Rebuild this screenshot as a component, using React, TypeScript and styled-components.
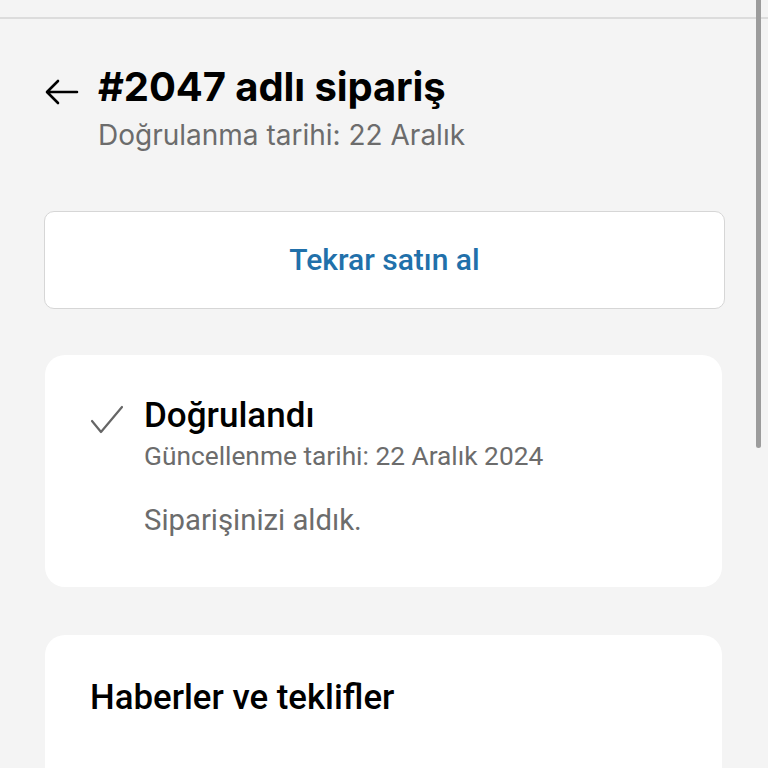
import React from "react";
import styled, { createGlobalStyle } from "styled-components";

const Global = createGlobalStyle`
  html, body { margin: 0; padding: 0; background: #f4f4f4; }
  body { font-family: Inter, "Noto Sans", "Liberation Sans", sans-serif; overflow: hidden; }
`;

const Page = styled.div`
  width: 768px;
  height: 768px;
  background: #f4f4f4;
  overflow: hidden;
  position: relative;
`;

const TopRule = styled.div`
  margin-top: 17px;
  height: 2px;
  background: #dcdcdc;
`;

const Content = styled.div`
  display: flex;
  flex-direction: column;
  padding: 0 44px 0 44px;
`;

const Header = styled.div`
  display: flex;
  align-items: flex-start;
  gap: 18px;
  margin-top: 43px;
`;

const BackButton = styled.div`
  width: 36px;
  height: 36px;
  margin-top: 12px;
  display: flex;
  align-items: center;
  justify-content: center;
`;

const TitleBlock = styled.div`
  display: flex;
  flex-direction: column;
`;

const Title = styled.h1`
  margin: 0;
  font-size: 40px;
  line-height: 50px;
  font-weight: 700;
  color: #000;
  letter-spacing: -0.1px;
`;

const Subtitle = styled.div`
  font-size: 28px;
  line-height: 34px;
  color: #6c6c6c;
  margin-top: 6px;
`;

const ActionButton = styled.button`
  margin-top: 59px;
  height: 98px;
  border: 1px solid #d6d6d6;
  border-radius: 10px;
  background: #fff;
  font-family: Roboto, "Liberation Sans", sans-serif;
  font-size: 30px;
  font-weight: 500;
  color: #2170aa;
  display: flex;
  align-items: center;
  justify-content: center;
  padding: 0 0 2px 0;
  width: 681px;
`;

const Card = styled.div<{ $top: number; $minHeight?: number }>`
  margin-top: ${(p) => p.$top}px;
  margin-left: 1px;
  width: 677px;
  min-height: ${(p) => p.$minHeight ?? 0}px;
  background: #fff;
  border-radius: 20px;
  box-sizing: border-box;
  padding: 42px 45px 50px 45px;
  font-family: Roboto, "Liberation Sans", sans-serif;
  flex-shrink: 0;
`;

const StatusRow = styled.div`
  display: flex;
  align-items: flex-start;
  gap: 20px;
`;

const CheckIcon = styled.div`
  width: 34px;
  height: 30px;
  margin-top: 8px;
`;

const StatusTexts = styled.div`
  display: flex;
  flex-direction: column;
`;

const StatusTitle = styled.div`
  font-size: 35px;
  line-height: 38px;
  font-weight: 500;
  color: #000;
`;

const StatusDate = styled.div`
  font-size: 26.3px;
  line-height: 30px;
  color: #6c6c6c;
  margin-top: 6px;
`;

const StatusNote = styled.div`
  font-size: 29.3px;
  line-height: 34px;
  color: #6c6c6c;
  margin-top: 32px;
`;

const SectionTitle = styled.div`
  font-size: 34.8px;
  line-height: 40px;
  font-weight: 500;
  color: #000;
`;

const Scrollbar = styled.div`
  position: absolute;
  top: 0;
  right: 7px;
  width: 5px;
  height: 448px;
  background: #9c9c9c;
  border-radius: 0 0 3px 3px;
`;

export default function App() {
  return (
    <Page>
      <Global />
      <TopRule />
      <Content>
        <Header>
          <BackButton>
            <svg width="34" height="26" viewBox="0 0 34 26" fill="none">
              <path d="M32 13H3M13 2L2 13l11 11" stroke="#000" strokeWidth="2.6" strokeLinecap="round" strokeLinejoin="round" />
            </svg>
          </BackButton>
          <TitleBlock>
            <Title>#2047 adlı sipariş</Title>
            <Subtitle>Doğrulanma tarihi: 22 Aralık</Subtitle>
          </TitleBlock>
        </Header>
        <ActionButton>Tekrar satın al</ActionButton>
        <Card $top={46}>
          <StatusRow>
            <CheckIcon>
              <svg width="34" height="30" viewBox="0 0 34 30" fill="none">
                <path d="M2 16l9 11L32 2" stroke="#666" strokeWidth="2.2" strokeLinecap="round" strokeLinejoin="round" />
              </svg>
            </CheckIcon>
            <StatusTexts>
              <StatusTitle>Doğrulandı</StatusTitle>
              <StatusDate>Güncellenme tarihi: 22 Aralık 2024</StatusDate>
              <StatusNote>Siparişinizi aldık.</StatusNote>
            </StatusTexts>
          </StatusRow>
        </Card>
        <Card $top={48} $minHeight={220}>
          <SectionTitle>Haberler ve teklifler</SectionTitle>
        </Card>
      </Content>
      <Scrollbar />
    </Page>
  );
}
